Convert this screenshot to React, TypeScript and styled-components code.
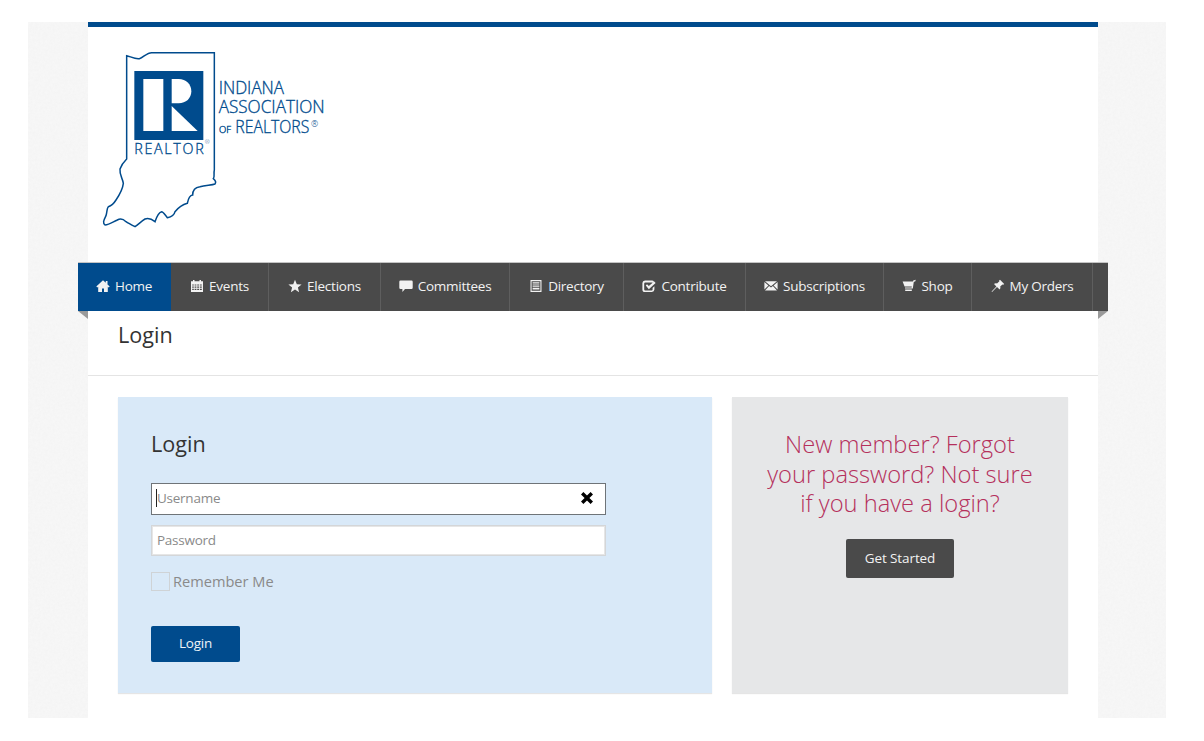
import * as React from "react"
import styled, { createGlobalStyle } from "styled-components"

const GlobalStyle = createGlobalStyle`
  html, body {
    margin: 0;
    padding: 0;
    background: #fff;
    font-family: "Open Sans", "Liberation Sans", sans-serif;
  }
  * { box-sizing: border-box; }
`

const noise = `url("data:image/svg+xml,%3Csvg xmlns='http://www.w3.org/2000/svg' width='200' height='200'%3E%3Cfilter id='n'%3E%3CfeTurbulence type='fractalNoise' baseFrequency='0.4' numOctaves='3'/%3E%3CfeColorMatrix values='0 0 0 0 0.5 0 0 0 0 0.5 0 0 0 0 0.5 0 0 0 0.07 0'/%3E%3C/filter%3E%3Crect width='200' height='200' filter='url(%23n)'/%3E%3C/svg%3E")`

const Shell = styled.div`
  width: 1138px;
  height: 696px;
  margin: 22px 0 23px 28px;
  padding: 0 68px 0 60px;
  background-color: #f8f8f8;
  background-image: ${noise};
`

const Container = styled.div`
  height: 100%;
  background: #fff;
  border-top: 5px solid #004b8d;
`

const Header = styled.header`
  height: 236px;
  padding: 18px 0 0 12px;
`

const Nav = styled.nav`
  position: relative;
  display: flex;
  height: 48px;
  margin: 0 -10px;
  background: #4a4a4a;
  box-shadow: 0 -1px 0 #c4c4c4;
`

const Fold = styled.span<{ $side: "left" | "right" }>`
  position: absolute;
  top: 100%;
  ${props => props.$side}: 0;
  width: 10px;
  height: 8px;
  background: #9a9a9a;
  clip-path: ${props =>
    props.$side === "left"
      ? "polygon(0 0, 100% 0, 100% 100%)"
      : "polygon(0 0, 100% 0, 0 100%)"};
`

const NavItem = styled.a<{ $active?: boolean; $width: number }>`
  display: flex;
  align-items: center;
  justify-content: center;
  gap: 5px;
  width: ${props => props.$width}px;
  padding-bottom: 3px;
  border-right: 1px solid ${props => (props.$active ? "#004b8d" : "#5e5e5e")};
  background: ${props => (props.$active ? "#004b8d" : "transparent")};
  color: #f2f2f2;
  font-size: 13.5px;
  letter-spacing: -0.25px;
  line-height: 20px;
  white-space: nowrap;
  svg {
    flex: none;
    width: 14px;
    height: 14px;
    fill: #f2f2f2;
  }
`

const TitleBar = styled.div`
  height: 65px;
  padding: 9px 30px 0;
  border-bottom: 1px solid #e4e4e4;
`

const PageTitle = styled.h1`
  margin: 0;
  color: #333;
  font-size: 21.6px;
  font-weight: 400;
  line-height: 30px;
`

const Panels = styled.div`
  display: flex;
  gap: 20px;
  padding: 21px 30px 0;
`

const LoginPanel = styled.section`
  width: 594px;
  height: 296px;
  padding: 32px 33px 0;
  background: #d9e9f8;
  box-shadow: 0 1px 1px rgba(0, 0, 0, 0.1);
`

const PanelTitle = styled.h2`
  margin: 0 0 24px;
  color: #333;
  font-size: 21.6px;
  font-weight: 400;
  line-height: 30px;
`

const Field = styled.div`
  position: relative;
  width: 455px;
  margin-bottom: 10px;
`

const TextInput = styled.input<{ $focused?: boolean }>`
  display: block;
  width: 100%;
  height: ${props => (props.$focused ? 32 : 31)}px;
  padding: 0 5px 2px;
  border: 1px solid ${props => (props.$focused ? "#6f7478" : "#d4d6d8")};
  border-radius: 0;
  outline: none;
  background: #fff;
  box-shadow: ${props => (props.$focused ? "none" : "inset 0 0 0 1px #e6e6e6")};
  font-family: inherit;
  font-size: 13.5px;
  letter-spacing: -0.25px;
  &::placeholder {
    color: #8a8a8a;
    opacity: 1;
  }
`

const Caret = styled.span`
  position: absolute;
  top: 6px;
  left: 5px;
  width: 1px;
  height: 18px;
  background: #222;
`

const ClearIcon = styled.svg`
  position: absolute;
  top: 8px;
  right: 12px;
  width: 14px;
  height: 14px;
`

const RememberRow = styled.label`
  display: flex;
  align-items: center;
  gap: 3px;
  height: 20px;
  margin-top: 15px;
  color: #8a8a8a;
  font-size: 14.6px;
`

const CheckBox = styled.span`
  width: 19px;
  height: 19px;
  border: 1px solid #cfd3d6;
`

const PrimaryButton = styled.button`
  display: block;
  width: 89px;
  height: 36px;
  margin-top: 35px;
  padding: 0 0 3px;
  border: 0;
  border-radius: 2px;
  background: #004b8d;
  color: #eef3f8;
  font-family: inherit;
  font-size: 13.5px;
  letter-spacing: -0.2px;
`

const HelpPanel = styled.section`
  display: flex;
  flex-direction: column;
  align-items: center;
  width: 336px;
  height: 296px;
  padding: 33px 30px 0;
  background: #e6e7e8;
  box-shadow: 0 1px 1px rgba(0, 0, 0, 0.1);
`

const HelpText = styled.p`
  margin: 0 0 20px;
  color: #b5305c;
  font-size: 23.7px;
  font-weight: 300;
  line-height: 29.5px;
  text-align: center;
`

const DarkButton = styled.button`
  width: 108px;
  height: 39px;
  padding: 0 0 1px;
  border: 0;
  border-radius: 2px;
  background: #4a4a4a;
  color: #f2f2f2;
  font-family: inherit;
  font-size: 13.5px;
  letter-spacing: -0.1px;
`

const Logo = () => (
  <svg width="240" height="190" viewBox="60 90 720 570">
    <path
      d="M140 122 C150 124 165 133 178 131 C190 128 200 113 215 113 L403 113 L403 465 C400 478 405 484 400 491 C406 496 408 503 405 507 C395 511 375 510 360 515 C345 517 338 525 338 540 C328 541 325 550 322 565 C305 570 295 578 285 590 C283 600 278 605 262 608 C255 600 250 590 245 590 C235 592 230 605 225 620 C215 612 205 608 195 612 C185 618 175 628 165 635 C155 630 145 625 138 620 C130 612 120 610 112 615 C100 620 88 630 75 630 C68 625 70 618 78 602 C82 590 80 580 85 575 C95 572 100 568 108 555 C118 540 128 525 130 505 C128 490 118 480 120 462 C125 448 132 440 140 432 Z"
      fill="none"
      stroke="#004b8d"
      strokeWidth="4.5"
    />
    <rect x="163" y="168" width="207" height="207" fill="#004b8d" />
    <rect x="190" y="192" width="60" height="156" fill="#fff" />
    <path d="M275 192 H296 C318 192 334 208 334 229 C334 250 318 265 296 265 H275 Z" fill="#fff" />
    <path d="M275 273 L353 348 H275 Z" fill="#fff" />
    <g fontFamily="'Open Sans', sans-serif" fontWeight="300" fill="#004b8d" stroke="#004b8d" strokeWidth="1">
      <text x="163" y="416" fontSize="43" textLength="208" lengthAdjust="spacing">REALTOR</text>
      <text x="374" y="388" fontSize="18" strokeWidth="0">®</text>
      <text x="416" y="236" fontSize="52" textLength="196" lengthAdjust="spacingAndGlyphs">INDIANA</text>
      <text x="416" y="295" fontSize="52" textLength="318" lengthAdjust="spacingAndGlyphs">ASSOCIATION</text>
      <text x="417" y="353" fontSize="25" textLength="36" lengthAdjust="spacingAndGlyphs">OF</text>
      <text x="466" y="353" fontSize="52" textLength="222" lengthAdjust="spacingAndGlyphs">REALTORS</text>
      <text x="693" y="336" fontSize="26" strokeWidth="0">®</text>
    </g>
  </svg>
)

const icons: Record<string, React.ReactNode> = {
  home: <path d="M7 1.2 L.3 7.6 l1 1 L2.2 7.8 V13 H6 V9.4 H8 V13 H11.8 V7.8 l.9.8 1-1 L11.5 5.5 V2 H9.8 V3.8 Z" />,
  calendar: (
    <path
      fillRule="evenodd"
      d="M3 1 h1.5 v1.2 H9.5 V1 H11 v1.2 h2 V13 H1 V2.2 h2 Z M2.2 5.4 V6.6 H3.8 V5.4 Z M4.6 5.4 V6.6 H6.4 V5.4 Z M7.2 5.4 V6.6 H9 V5.4 Z M9.8 5.4 V6.6 H11.8 V5.4 Z M2.2 7.6 V8.8 H3.8 V7.6 Z M4.6 7.6 V8.8 H6.4 V7.6 Z M7.2 7.6 V8.8 H9 V7.6 Z M9.8 7.6 V8.8 H11.8 V7.6 Z M2.2 9.8 V11 H3.8 V9.8 Z M4.6 9.8 V11 H6.4 V9.8 Z M7.2 9.8 V11 H9 V9.8 Z M9.8 9.8 V11 H11.8 V9.8 Z"
    />
  ),
  star: <polygon points="7,.8 8.8,5.2 13.6,5.5 9.9,8.5 11.1,13.2 7,10.6 2.9,13.2 4.1,8.5 .4,5.5 5.2,5.2" />,
  comment: <path d="M1.5 1.6 H12.5 a1.2 1.2 0 0 1 1.2 1.2 V8.8 a1.2 1.2 0 0 1 -1.2 1.2 H6 L3.4 13 V10 H1.5 A1.2 1.2 0 0 1 .3 8.8 V2.8 A1.2 1.2 0 0 1 1.5 1.6 Z" />,
  list: (
    <path
      fillRule="evenodd"
      d="M1.5 1 H12.5 V13 H1.5 Z M2.6 2.2 V11.8 H11.4 V2.2 Z M3.6 3.2 H10.4 V4.6 H3.6 Z M3.6 5.4 H10.4 V6.4 H3.6 Z M3.6 7.2 H10.4 V8.2 H3.6 Z M3.6 9 H10.4 V10.6 H3.6 Z"
    />
  ),
  check: (
    <path
      fillRule="evenodd"
      d="M3 1.5 H10 a2.4 2.4 0 0 1 2 1 L10.7 3.7 A1 1 0 0 0 10 3.4 H3.2 A1 1 0 0 0 2.2 4.4 V10.6 A1 1 0 0 0 3.2 11.6 H9.6 A1 1 0 0 0 10.6 10.6 V9 L12.4 7.2 V10.6 A2.6 2.6 0 0 1 9.8 13 H3 A2.6 2.6 0 0 1 .4 10.4 V4 A2.6 2.6 0 0 1 3 1.5 Z M3.8 6.4 L5 5.2 L6.8 7 L12.2 2.6 L13.6 4 L6.8 10.2 Z"
    />
  ),
  mail: (
    <path d="M1 2.2 H13 L7 7.2 Z M.4 3 L4.4 6.4 L.4 10.6 Z M13.6 3 V10.6 L9.6 6.4 Z M5.1 7 L7 8.6 L8.9 7 L13 11.4 H1 Z" />
  ),
  cart: (
    <path d="M13.8 .8 L13.2 2.6 L11.8 2.8 L10.8 9.6 H3 V8.4 H9.6 L9.8 7.4 H2.6 L.6 2.4 L11 2.4 L11.2 1.6 Z M3.2 10.6 H9.8 V12 H3.2 Z" />
  ),
  pin: <path d="M9 .8 L13.2 5 L12.2 5.8 L11.4 5.4 L9.2 7.6 C9.6 8.8 9.4 9.8 8.6 10.6 L6 8 L1 13 L.6 12.6 L5.4 7.4 L3 5 C3.8 4.2 4.8 4 6 4.4 L8.4 2.2 L8.1 1.6 Z" />,
}

const navItems = [
  { label: "Home", icon: "home", width: 93, active: true },
  { label: "Events", icon: "calendar", width: 98 },
  { label: "Elections", icon: "star", width: 112 },
  { label: "Committees", icon: "comment", width: 129 },
  { label: "Directory", icon: "list", width: 114 },
  { label: "Contribute", icon: "check", width: 122 },
  { label: "Subscriptions", icon: "mail", width: 138 },
  { label: "Shop", icon: "cart", width: 88 },
  { label: "My Orders", icon: "pin", width: 121 },
]

export default function App() {
  return (
    <>
      <GlobalStyle />
      <Shell>
        <Container>
          <Header>
            <Logo />
          </Header>
          <Nav>
            {navItems.map(item => (
              <NavItem key={item.label} $active={item.active} $width={item.width}>
                <svg viewBox="0 0 14 14">{icons[item.icon]}</svg>
                {item.label}
              </NavItem>
            ))}
            <Fold $side="left" />
            <Fold $side="right" />
          </Nav>
          <TitleBar>
            <PageTitle>Login</PageTitle>
          </TitleBar>
          <Panels>
            <LoginPanel>
              <PanelTitle>Login</PanelTitle>
              <Field>
                <TextInput $focused placeholder="Username" />
                <Caret />
                <ClearIcon viewBox="0 0 14 14">
                  <path d="M1 3.4 L3.4 1 L7 4.6 L10.6 1 L13 3.4 L9.4 7 L13 10.6 L10.6 13 L7 9.4 L3.4 13 L1 10.6 L4.6 7 Z" fill="#000" />
                </ClearIcon>
              </Field>
              <Field>
                <TextInput placeholder="Password" />
              </Field>
              <RememberRow>
                <CheckBox />
                Remember Me
              </RememberRow>
              <PrimaryButton>Login</PrimaryButton>
            </LoginPanel>
            <HelpPanel>
              <HelpText>New member? Forgot your password? Not sure if you have a login?</HelpText>
              <DarkButton>Get Started</DarkButton>
            </HelpPanel>
          </Panels>
        </Container>
      </Shell>
    </>
  )
}
